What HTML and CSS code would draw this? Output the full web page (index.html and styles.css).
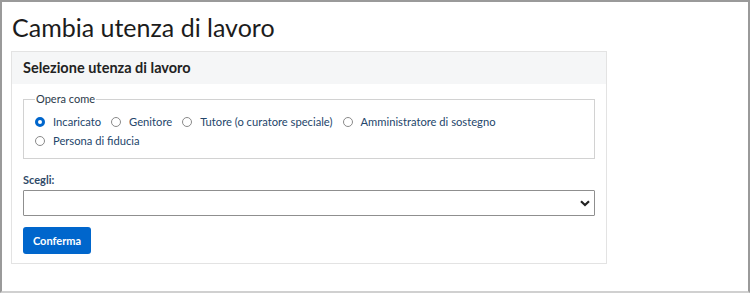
FILE: index.html
```html
<!DOCTYPE html>
<html lang="it">
<head>
<meta charset="utf-8">
<title>Cambia utenza di lavoro</title>
<link rel="stylesheet" href="styles.css">
</head>
<body>
<div class="frame">
  <h1 class="title">Cambia utenza di lavoro</h1>
  <div class="card">
    <div class="card-header">Selezione utenza di lavoro</div>
    <div class="card-body">
      <fieldset class="group">
        <legend class="legend">Opera come</legend>
        <div class="options">
          <label class="opt"><input type="radio" name="ruolo" class="radio" checked><span>Incaricato</span></label>
          <label class="opt"><input type="radio" name="ruolo" class="radio"><span>Genitore</span></label>
          <label class="opt"><input type="radio" name="ruolo" class="radio"><span>Tutore (o curatore speciale)</span></label>
          <label class="opt"><input type="radio" name="ruolo" class="radio"><span>Amministratore di sostegno</span></label>
          <label class="opt"><input type="radio" name="ruolo" class="radio"><span>Persona di fiducia</span></label>
        </div>
      </fieldset>
      <label class="field-label" for="scegli">Scegli:</label>
      <div class="select-wrap">
        <select id="scegli" class="select"><option></option></select>
        <svg class="chevron" width="10" height="7" viewBox="0 0 10 7"><path d="M1 1.2 L5 5 L9 1.2" fill="none" stroke="#222" stroke-width="2.2"/></svg>
      </div>
      <button class="btn" type="button">Conferma</button>
    </div>
  </div>
</div>
</body>
</html>
```
FILE: styles.css
```css
* { box-sizing: border-box; }
html, body { margin: 0; padding: 0; background: #fff; }
body { font-family: Lato, "Open Sans", sans-serif; color: #1a1a1a; }
.frame {
  width: 750px;
  height: 293px;
  border: 2px solid #9a9a9a;
  border-bottom-color: #d0d0d0;
  padding: 0 0 0 9px;
}
.title {
  margin: 0;
  padding: 10px 0 0 1px;
  font-size: 25px;
  font-weight: 400;
  line-height: 30px;
  height: 49px;
  color: #1c1c1c;
}
.card {
  width: 596px;
  border: 1px solid #e3e3e3;
}
.card-header {
  background: #f5f6f7;
  height: 32px;
  padding: 7px 11px 0;
  font-size: 14.5px;
  font-weight: 700;
  color: #222;
  line-height: 18px;
}
.card-body {
  padding: 9px 11px 9px;
}
.group {
  margin: 0;
  border: 1px solid #d2d2d2;
  padding: 0 11px 6px;
  height: 66px;
  min-width: 0;
}
.legend {
  padding: 0 1px;
  font-size: 11px;
  color: #2b3a4a;
  line-height: 12px;
}
.options {
  display: flex;
  flex-wrap: wrap;
  column-gap: 10px;
  row-gap: 5px;
  padding-top: 10px;
}
.opt {
  display: flex;
  align-items: center;
  gap: 8px;
  font-size: 11.2px;
  color: #24466b;
  line-height: 14px;
}
.radio {
  appearance: none;
  -webkit-appearance: none;
  margin: 0;
  width: 10px;
  height: 10px;
  border: 1px solid #8a8a8a;
  border-radius: 50%;
  background: #fff;
}
.radio:checked {
  border: 3px solid #0066cc;
}
.field-label {
  display: block;
  margin-top: 14px;
  font-size: 11px;
  font-weight: 700;
  color: #2f4a68;
  line-height: 14px;
}
.select-wrap {
  position: relative;
  margin-top: 3px;
  width: 572px;
}
.select {
  display: block;
  appearance: none;
  -webkit-appearance: none;
  width: 100%;
  height: 26px;
  border: 1px solid #8f8f8f;
  border-radius: 1px;
  background: #fff;
  margin: 0;
}
.chevron {
  position: absolute;
  right: 5px;
  top: 10px;
}
.btn {
  display: block;
  margin-top: 11px;
  width: 68px;
  height: 27px;
  background: #0066cc;
  color: #fff;
  border: 0;
  border-radius: 3px;
  font-family: Lato, "Open Sans", sans-serif;
  font-size: 11px;
  font-weight: 700;
  padding: 0;
}
```
